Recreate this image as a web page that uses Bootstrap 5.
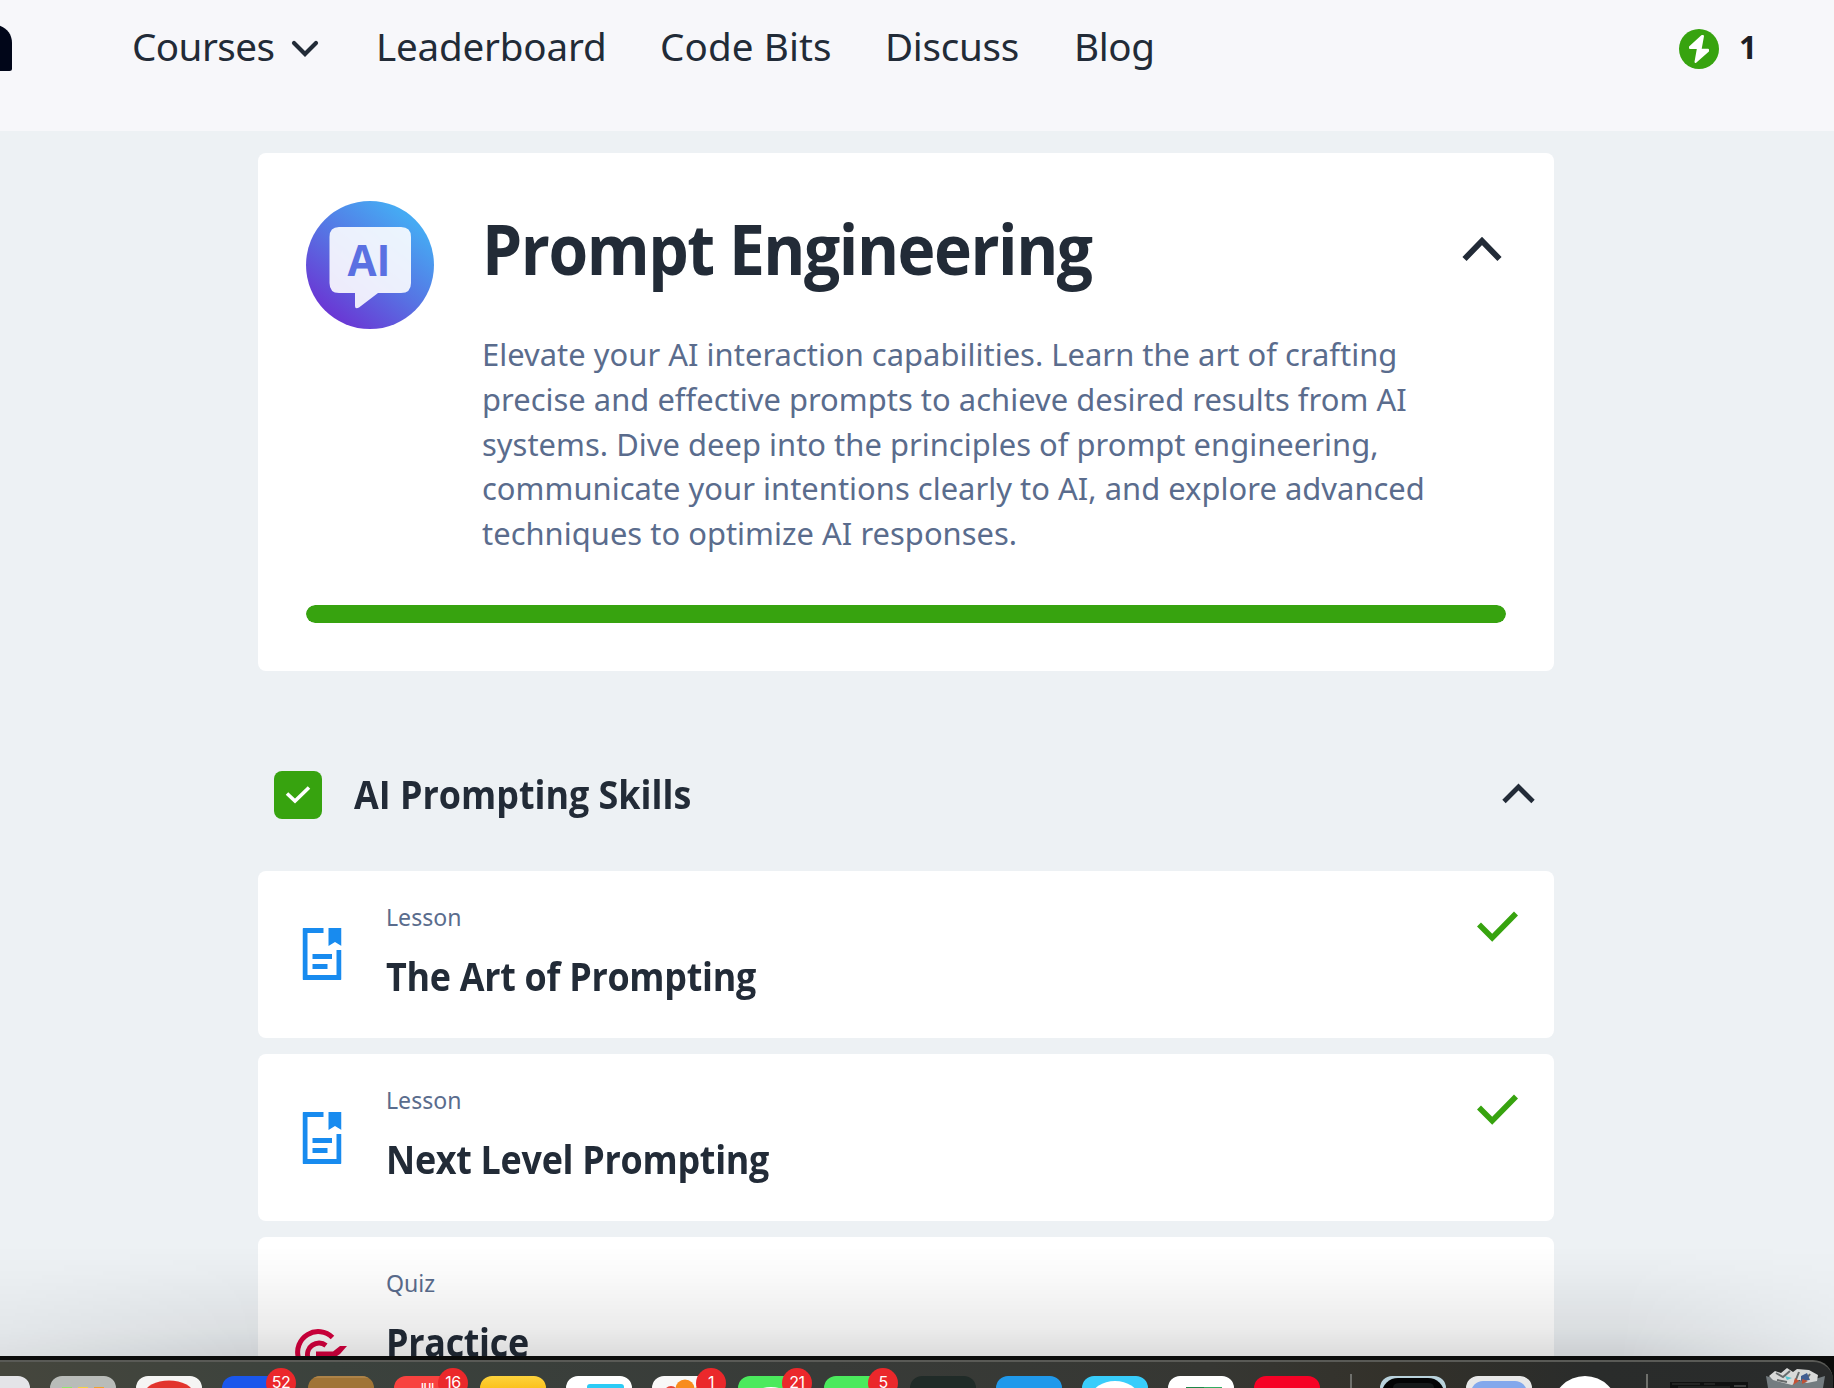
<!DOCTYPE html>
<html lang="en">
<head>
<meta charset="utf-8">
<meta name="viewport" content="width=device-width, initial-scale=1">
<title>Prompt Engineering</title>
<link rel="stylesheet" href="https://cdn.jsdelivr.net/npm/bootstrap@5.3.0/dist/css/bootstrap.min.css">
<style>
  :root { --ink:#222b37; --slate:#5a6c8d; --leaf:#37a30f; --page:#edf1f4; }
  body { height:1388px; overflow:hidden; background:var(--page); color:var(--ink); font-family:"Noto Sans","Open Sans",sans-serif; }
  .screen { height:1388px; }
  .browser-view { height:1356px; position:relative; }
  .topbar { height:131px; background:#f7f7fa; padding:0 80px 38px 0; }
  .brand-end { width:132px; height:93px; }
  .topbar .nav-link { font-size:38.6px; line-height:93px; height:93px; padding:0; color:var(--ink); white-space:nowrap; }
  .nv-courses { width:244px; letter-spacing:-.55px; }
  .nv-leader { width:284px; letter-spacing:-.2px; }
  .nv-code { width:225px; letter-spacing:.1px; }
  .nv-discuss { width:189px; letter-spacing:-.3px; }
  .nv-blog { letter-spacing:-.4px; }
  .score { font:700 31.5px/94px "Noto Sans",sans-serif; color:#1d1e24; width:15px; margin-left:20px; }
  .col-main { width:1296px; margin-left:258px; }
  .panel { background:#fff; border:0; border-radius:8px; }
  .course { margin-top:22px; height:518px; padding:48px; }
  .course-body { height:404px; }
  .course-text { width:960px; margin-left:48px; }
  .course h1 { font:700 69.5px/92px "Open Sans",sans-serif; letter-spacing:-1.6px; margin:1px 0 0; white-space:nowrap; transform:scaleX(.923); transform-origin:0 0; }
  .course p { font-size:30.9px; line-height:44.8px; color:var(--slate); letter-spacing:.03px; margin:38px 0 0; white-space:nowrap; }
  .course-toggle { margin:32px -2px 0 auto; }
  .progress { height:18px; border-radius:9px; }
  .progress-bar { background:var(--leaf); border-radius:9px; }
  .section-head { height:200px; padding:48px 16px 0; }
  .tick-box { width:48px; height:48px; border-radius:8px; background:var(--leaf); margin-right:32px; }
  .section-head h2, .step h3 { font:700 38.6px/48px "Open Sans",sans-serif; margin:0; white-space:nowrap; transform:scaleX(.93); transform-origin:0 0; }
  .section-head h2 { letter-spacing:0; margin-bottom:3px; }
  .step { height:167px; margin-bottom:16px; padding:30px 35px 0 40px; flex-direction:row; }
  .step-kind { font-size:23.1px; line-height:32px; color:var(--slate); }
  .step h3 { letter-spacing:-.3px; margin-top:19px; }
  .step-icon { margin:23px 38px 0 0; width:50px; height:60px; }
  .step-done { margin-top:10px; }
  .dock-shade { position:absolute; left:0; right:0; bottom:0; height:110px;
    background:linear-gradient(to bottom,rgba(0,0,0,0),rgba(0,0,0,.018) 25%,rgba(0,0,0,.05) 52%,rgba(0,0,0,.08) 76%,rgba(0,0,0,.14));
    -webkit-mask-image:linear-gradient(to right,rgba(0,0,0,.5),#000 260px,#000 1620px,rgba(0,0,0,.3)); mask-image:linear-gradient(to right,rgba(0,0,0,.5),#000 260px,#000 1620px,rgba(0,0,0,.3)); }
  .dock { height:32px; background:#0b0c0b; padding-top:4px; }
  .dock-glass { height:28px; border-top:2px solid #595a56; border-top-right-radius:20px; margin-right:1px; padding-top:14px;
    background:linear-gradient(to right,#45463d,#3b423d 18%,#383b38 45%,#363733 66%,#33312a 76%,#2a2c2b 87%,#292b2b); }
  .app { width:66px; height:12px; margin-right:20px; border-radius:18px 18px 0 0; position:relative; flex:none; }
  .app svg { display:block; width:66px; height:12px; border-radius:18px 18px 0 0; }
  .app-badge { position:absolute; right:-8px; top:-8px; width:30px; height:20px; overflow:hidden; }
  .app-badge span { display:block; width:30px; height:30px; border-radius:15px; background:#eb282b; color:#fff; font:16px/29px Inter,"Liberation Sans",sans-serif; text-align:center; letter-spacing:-.5px; }
  .dock-line { width:2px; height:14px; margin-top:-2px; background:#6f706c; flex:none; }
</style>
<script src="https://cdn.jsdelivr.net/npm/bootstrap@5.3.0/dist/js/bootstrap.bundle.min.js"></script>
</head>
<body>
<svg width="0" height="0" class="d-none">
  <symbol id="doc" viewBox="0 0 39 52"><g fill="#188bef"><path d="M1 0H21V5H5V47H34V22H39V51Q39 52 38 52H1Q0 52 0 51V1Q0 0 1 0Z"/><path d="M26 0H39V18L32.500 14L26 18Z"/><path d="M10 26H29.500V31H10ZM10 36H25V41H10Z"/></g></symbol>
  <symbol id="done" viewBox="0 0 42 31"><path d="M2 13.500L15.200 26.700L39 2.500" fill="none" stroke="#37a30f" stroke-width="5.600"/></symbol>
</svg>
<div class="screen d-flex flex-column">
  <div class="browser-view overflow-hidden">
    <nav class="topbar d-flex align-items-start">
      <div class="brand-end"><svg width="14" height="93" class="d-block"><path d="M-5 24.500C5 26 12 33 12 43V68.500Q12 71 9.500 71H-5Z" fill="#010619"/></svg></div>
      <div class="nav flex-nowrap flex-grow-1">
        <a class="nav-link nv-courses d-flex align-items-center" href="#">Courses
          <svg width="30" height="20" viewBox="0 0 30 20" class="ms-3 mt-1"><path d="M4 4L15 15L26 4" fill="none" stroke="#222b37" stroke-width="4.200" stroke-linecap="round"/></svg></a>
        <a class="nav-link nv-leader" href="#">Leaderboard</a>
        <a class="nav-link nv-code" href="#">Code Bits</a>
        <a class="nav-link nv-discuss" href="#">Discuss</a>
        <a class="nav-link nv-blog" href="#">Blog</a>
      </div>
      <div class="d-flex align-items-center">
        <svg width="40" height="93" viewBox="0 0 40 93"><circle cx="20" cy="48" r="20" fill="#37a30f"/><path d="M23 35L11 46V47H19L16.500 61L29 50V48.800H21.500L24 35Z" fill="#fff" stroke="#fff" stroke-width="2" stroke-linejoin="round"/></svg>
        <span class="score">1</span>
      </div>
    </nav>

    <main class="col-main">
      <section class="card panel course">
        <div class="course-body d-flex">
          <svg width="128" height="128" viewBox="0 0 128 128" class="flex-shrink-0">
            <defs><linearGradient id="sky" x1=".2" y1=".93" x2=".82" y2=".15"><stop offset="0" stop-color="#6b34d3"/><stop offset=".5" stop-color="#5772e3"/><stop offset="1" stop-color="#46aaf3"/></linearGradient></defs>
            <circle cx="64" cy="64" r="64" fill="url(#sky)"/>
            <path d="M33 26H95Q105 26 105 36V82Q105 92 95 92H72L53 106.500Q49 108.500 49 105V92H33Q23.500 92 23.500 82V36Q23.500 26 33 26Z" fill="#fff" fill-opacity=".89"/>
            <text x="41.500" y="75" font-family="Open Sans" font-weight="700" font-size="43.800" textLength="43" lengthAdjust="spacingAndGlyphs" fill="#5a70e2">AI</text>
          </svg>
          <div class="course-text">
            <h1>Prompt Engineering</h1>
            <p>Elevate your AI interaction capabilities. Learn the art of crafting<br>precise and effective prompts to achieve desired results from AI<br>systems. Dive deep into the principles of prompt engineering,<br>communicate your intentions clearly to AI, and explore advanced<br>techniques to optimize AI responses.</p>
          </div>
          <svg width="48" height="32" viewBox="0 0 48 32" class="course-toggle flex-shrink-0"><path d="M4.500 26L22 8L39.500 26" fill="none" stroke="#222b37" stroke-width="5.800"/></svg>
        </div>
        <div class="progress"><div class="progress-bar" style="width:100%"></div></div>
      </section>

      <div class="section-head d-flex align-items-center">
        <div class="tick-box"><svg width="48" height="48" class="d-block"><path d="M13 22.500L21 30L35 16.500" fill="none" stroke="#fff" stroke-width="3.600"/></svg></div>
        <h2>AI Prompting Skills</h2>
        <svg width="37" height="24" viewBox="0 0 37 24" class="ms-auto"><path d="M3 18.500L17.500 4L32 18.500" fill="none" stroke="#222b37" stroke-width="4.800"/></svg>
      </div>

      <article class="card panel step">
        <svg class="step-icon flex-shrink-0" viewBox="-4.500 -4 50 60"><use href="#doc" width="39" height="52"/></svg>
        <div><div class="step-kind">Lesson</div><h3>The Art of Prompting</h3></div>
        <svg width="42" height="31" class="ms-auto step-done"><use href="#done"/></svg>
      </article>
      <article class="card panel step">
        <svg class="step-icon flex-shrink-0" viewBox="-4.500 -5 50 60"><use href="#doc" width="39" height="52"/></svg>
        <div><div class="step-kind">Lesson</div><h3>Next Level Prompting</h3></div>
        <svg width="42" height="31" class="ms-auto step-done"><use href="#done"/></svg>
      </article>
      <article class="card panel step">
        <svg class="step-icon flex-shrink-0" viewBox="298 1290 50 60" overflow="visible"><g fill="none" stroke="#d9003f" stroke-width="5"><path d="M298.500 1358A20.500 20.500 0 0 1 332.500 1337.500"/><path d="M308 1358A11.500 11.500 0 0 1 326 1345.500"/><path d="M316 1351.500H333L340 1346H347L340 1354L334 1358H316Z" fill="#d9003f" stroke="none"/></g></svg>
        <div><div class="step-kind">Quiz</div><h3>Practice</h3></div>
      </article>
    </main>
    <div class="dock-shade"></div>
  </div>

  <footer class="dock">
    <div class="dock-glass d-flex align-items-start">
      <div class="app" style="margin-left:-36px;background:#e4e4e8"></div>
      <div class="app"><svg style="background:#b9bcb9"><path d="M12 11h10v1H12z" fill="#8ee86b"/><path d="M28 11h10v1H28z" fill="#f4d440"/><path d="M44 11h10v1H44z" fill="#efa12d"/></svg></div>
      <div class="app"><svg style="background:#f5f5f4"><ellipse cx="33" cy="17" rx="24" ry="12.500" fill="#e2342d"/></svg></div>
      <div class="app" style="background:#1a57ec"><div class="app-badge"><span>52</span></div></div>
      <div class="app"><svg style="background:#a07436"><path d="M0 0H66V2H0Z" fill="#ad8348"/></svg></div>
      <div class="app"><svg style="background:#f8423f"><text x="24" y="17.500" font-family="Inter" font-size="15" font-weight="600" textLength="19" lengthAdjust="spacingAndGlyphs" fill="#fff">JUL</text></svg><div class="app-badge"><span>16</span></div></div>
      <div class="app" style="background:linear-gradient(#fdd33d,#fbc21e)"></div>
      <div class="app"><svg style="background:#fff"><rect x="21" y="8" width="37" height="10" rx="3" fill="#2bcbf5"/></svg></div>
      <div class="app"><svg style="background:#f8f8f8"><circle cx="33" cy="13" r="9.500" fill="#f88c1d"/><circle cx="19" cy="17" r="7" fill="#e84538"/><circle cx="48" cy="17" r="7" fill="#f6c21e"/></svg><div class="app-badge"><span>1</span></div></div>
      <div class="app"><svg style="background:#4bea5d"><ellipse cx="33" cy="21" rx="18" ry="10" fill="#fff"/></svg><div class="app-badge"><span>21</span></div></div>
      <div class="app" style="background:#4bea5d"><div class="app-badge"><span>5</span></div></div>
      <div class="app" style="background:#202b28"></div>
      <div class="app" style="background:#2099eb"></div>
      <div class="app"><svg style="background:#38cdfb"><ellipse cx="33" cy="20" rx="23" ry="15" fill="#fff"/></svg></div>
      <div class="app"><svg style="background:#fff"><path d="M18 11H36V12H18Z" fill="#1c8748"/><path d="M36 11H54V12H36Z" fill="#32ad61"/></svg></div>
      <div class="app" style="background:#f60226;margin-right:30px"></div>
      <div class="dock-line" style="margin-right:28px"></div>
      <div class="app"><svg style="background:#b9d2dc"><rect x="2" y="2" width="62" height="30" rx="16" fill="#030405"/><path d="M13 12Q13 7 20 7H48Q54 7 54 12" fill="#15191a"/></svg></div>
      <div class="app"><svg style="background:#e8e8e8"><rect x="5" y="5" width="56" height="26" rx="12" fill="#83a8ec"/></svg></div>
      <div class="app" style="margin-right:28px"><svg><circle cx="33" cy="33" r="33" fill="#fff"/></svg></div>
      <div class="dock-line" style="margin-right:22px"></div>
      <svg width="80" height="12" class="flex-shrink-0"><path d="M0 6H78V12H0Z" fill="#101111"/><path d="M2 8H30M34 8H45" stroke="#383a38"/><path d="M64 10H76" stroke="#6e7170"/><path d="M8 11H60" stroke="#333735"/></svg>
      <svg width="62" height="20" viewBox="0 -8 62 20" style="margin:-8px 0 0 15px" class="flex-shrink-0"><path d="M1 0Q31 10 60 0L58 12H3Z" fill="#747c80"/><path d="M4 0L10-5L16-3L22-8L28-4L32-7L44-6L53-1L52 5L42 7L34 4L27 9L15 6L8 4Z" fill="#d8d9d8"/><path d="M11-3L18 1L25-5M34-4L30 6M45-2L40 5M12 4L22 6" stroke="#676b6c" stroke-width="2" fill="none"/><path d="M36 0L42-3L45 4L36 5Z" fill="#405d91"/><path d="M30 2L34 5L28 9Z" fill="#c55135"/><path d="M37 3L43 5L37 8Z" fill="#bd5237"/><path d="M20 0L27 2L22 4Z" fill="#54c3ce"/></svg>
    </div>
  </footer>
</div>
</body>
</html>
